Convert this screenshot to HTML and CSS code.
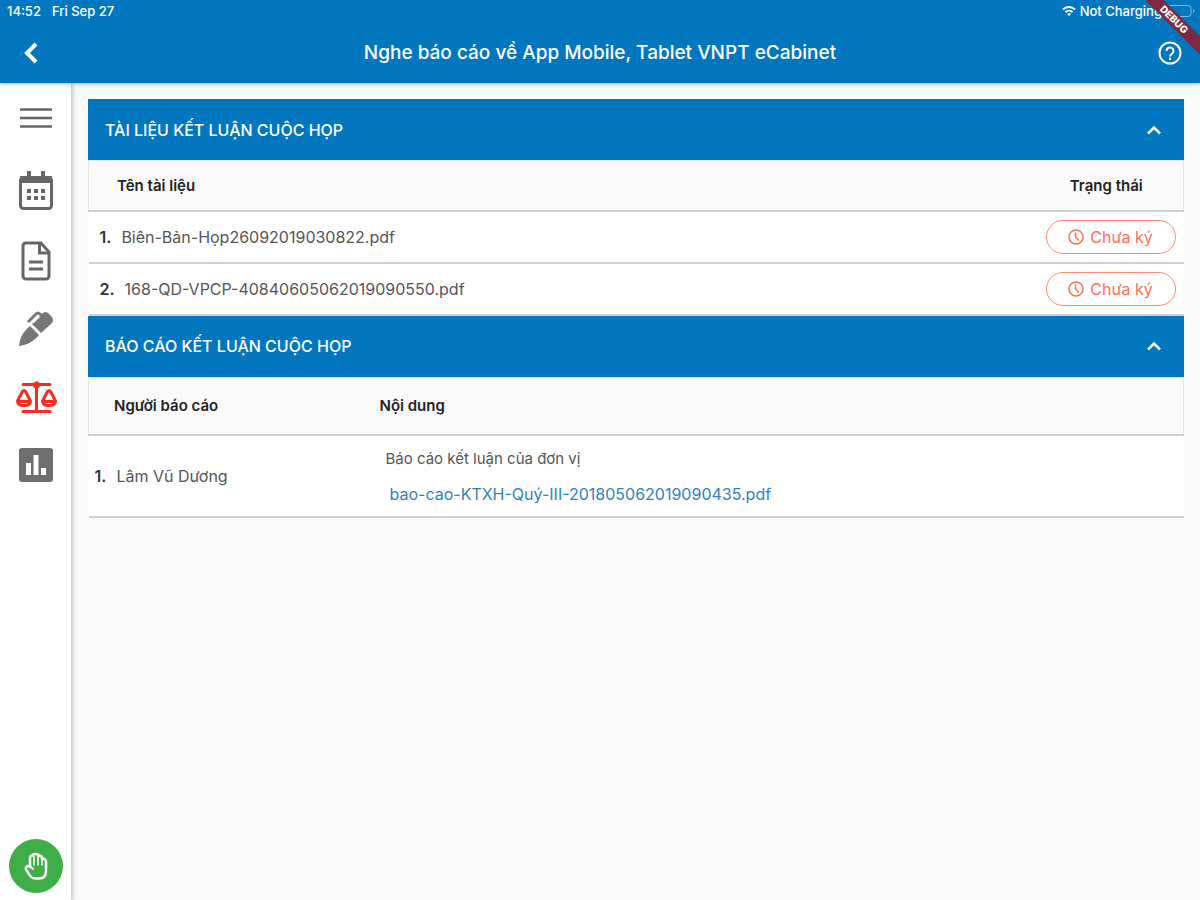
FILE: index.html
```
<!DOCTYPE html>
<html lang="vi">
<head>
    <meta charset="UTF-8">
    <meta name="viewport" content="width=device-width, initial-scale=1.0">
    <title>VNPT eCabinet</title>
    <link rel="stylesheet" href="styles.css">
</head>
<body>
    <header class="header">
        <div class="status-bar">
            <span>14:52</span>
            <span>Fri Sep 27</span>
            <span class="status-right">
                <svg width="14" height="12" viewBox="0 0 14 12" fill="none" stroke="#fff" stroke-width="2">
                    <path d="M1 4.5C4.500 1.200 9.500 1.200 13 4.500M3.500 7.200C5.500 5.300 8.500 5.300 10.500 7.200"/>
                    <path d="M5 9L7 11L9 9C8 8 6 8 5 9Z" fill="#fff" stroke="none"/>
                </svg>
                <span>Not Charging</span>
                <svg class="battery" width="30" height="14" viewBox="0 0 30 14" fill="none">
                    <rect x="1" y="1.500" width="24" height="11" rx="3" stroke="#7fb9de"/>
                    <path d="M2 3h3v8H2z" fill="#fff"/>
                    <path d="M27 5v4c2-1 2-3 0-4z" fill="#7fb9de"/>
                </svg>
            </span>
        </div>
        <div class="app-bar">
            <button class="icon-btn" aria-label="Quay lại">
                <svg width="24" height="24" viewBox="0 0 24 24" fill="none" stroke="#fff" stroke-width="4"><path d="M18 3L9 12L18 21"/></svg>
            </button>
            <h1>Nghe báo cáo về App Mobile, Tablet VNPT eCabinet</h1>
            <button class="icon-btn" aria-label="Trợ giúp">
                <svg width="24" height="24" viewBox="0 0 24 24" fill="none" stroke="#fff" stroke-width="2">
                    <circle cx="12" cy="12" r="10.500"/>
                    <path d="M8.500 10a3.500 3.500 0 1 1 5.500 2.800c-1.300 1-2 1.500-2 2.700"/>
                    <path d="M12 16.800v2.200"/>
                </svg>
            </button>
        </div>
        <span class="debug">DEBUG</span>
    </header>

    <div class="layout">
        <nav class="sidebar">
            <a href="#" aria-label="Menu">
                <svg width="34" height="22" viewBox="0 0 34 22" stroke="#666" stroke-width="2.600"><path d="M1 2.500h32M1 11h32M1 19.500h32"/></svg>
            </a>
            <a href="#" aria-label="Lịch họp">
                <svg width="34" height="40" viewBox="0 0 34 40" fill="#666">
                    <rect x="1.500" y="7.500" width="31" height="31" rx="3" fill="none" stroke="#666" stroke-width="3"/>
                    <path d="M1 6h32v7H1zM8 1h4v7H8zM22 1h4v7h-4z"/>
                    <path d="M8 19h4v4H8zM15 19h4v4h-4zM22 19h4v4h-4zM8 26h4v4H8zM15 26h4v4h-4zM22 26h4v4h-4z"/>
                </svg>
            </a>
            <a href="#" aria-label="Tài liệu">
                <svg width="30" height="40" viewBox="0 0 30 40" fill="none" stroke="#666" stroke-width="3">
                    <path d="M5 2h15l8 9v24a3 3 0 0 1-3 3H5a3 3 0 0 1-3-3V5a3 3 0 0 1 3-3z"/>
                    <path d="M18.500 2v10H28M8 21h14M8 28h14"/>
                </svg>
            </a>
            <a href="#" aria-label="Ký số">
                <svg width="36" height="36" viewBox="0 0 36 36" fill="#777">
                    <path d="M1 35C2 27 4 22 12 15L21 24C15 31 9 34 1 35Z"/>
                    <path d="M14 13L25 2Q27 0 30 2L34 6Q36 9 34 12L23 22Z"/>
                    <path d="M10 11L18 3Q20 1 22 3L24 5" fill="none" stroke="#777" stroke-width="3"/>
                    <path d="M15 11.500L21 5.500" stroke="#fff" stroke-width="2"/>
                </svg>
            </a>
            <a href="#" aria-label="Kết luận" aria-current="page">
                <svg width="42" height="34" viewBox="0 0 42 34" fill="none" stroke="#f22c1e" stroke-width="3" stroke-linecap="round" stroke-linejoin="round">
                    <path d="M8 4.500h27M21.500 3v28M8 31.500h27"/>
                    <circle cx="21.500" cy="5" r="3.500" fill="#f22c1e" stroke="none"/>
                    <path d="M2.500 21L7.500 11.500Q9 9.500 10.500 11.500L15.500 21Q15 25.500 9 25.500T2.500 21ZM4 21.500h10"/>
                    <path d="M27.500 21L32.500 11.500Q34 9.500 35.500 11.500L40.500 21Q40 25.500 34 25.500T27.500 21ZM29 21.500h10"/>
                </svg>
            </a>
            <a href="#" aria-label="Thống kê">
                <svg width="34" height="34" viewBox="0 0 34 34">
                    <rect width="34" height="34" rx="3" fill="#6e6e6e"/>
                    <path d="M7 15h5v12H7zM14.500 7h5v20h-5zM22 20h5v7h-5z" fill="#fff"/>
                </svg>
            </a>
            <button class="hand-btn" aria-label="Giơ tay">
                <svg width="26" height="28" viewBox="0 0 26 28" fill="none" stroke="#fff" stroke-linejoin="round" stroke-linecap="round">
                    <path stroke-width="2.500" d="M7 15V6q0-2.500 2.500-2.500Q10 2 12.500 2T16 3.500q3 0 3 3 4 0 4 3.500v9q0 7.500-7 7.500h-3.500q-4 0-6-3.500L3 17.500q-.5-3 2-3.500z"/>
                    <path stroke-width="1.500" d="M11 4.500V13M15 4.500V13M19 7v6"/>
                    <path stroke-width="2" d="M7 14l3 3"/>
                </svg>
            </button>
        </nav>

        <main class="content">
            <section>
                <button class="panel-head" aria-expanded="true">
                    TÀI LIỆU KẾT LUẬN CUỘC HỌP
                    <svg width="16" height="10" viewBox="0 0 16 10" fill="none" stroke="#fff" stroke-width="2.500"><path d="M2 8.500L8 2.500L14 8.500"/></svg>
                </button>
                <table class="docs">
                    <thead>
                        <tr><th>Tên tài liệu</th><th class="status">Trạng thái</th></tr>
                    </thead>
                    <tbody>
                        <tr>
                            <td><b>1.</b>Biên-Bản-Họp26092019030822.pdf</td>
                            <td class="status">
                                <button class="sign-btn">
                                    <svg width="16" height="16" viewBox="0 0 16 16" fill="none" stroke="#ff6e57" stroke-width="1.500"><circle cx="8" cy="8" r="7"/><path d="M7.500 3.500V8l3.500 3.500"/></svg>
                                    Chưa ký
                                </button>
                            </td>
                        </tr>
                        <tr>
                            <td><b>2.</b>168-QD-VPCP-40840605062019090550.pdf</td>
                            <td class="status">
                                <button class="sign-btn">
                                    <svg width="16" height="16" viewBox="0 0 16 16" fill="none" stroke="#ff6e57" stroke-width="1.500"><circle cx="8" cy="8" r="7"/><path d="M7.500 3.500V8l3.500 3.500"/></svg>
                                    Chưa ký
                                </button>
                            </td>
                        </tr>
                    </tbody>
                </table>
            </section>

            <section>
                <button class="panel-head" aria-expanded="true">
                    BÁO CÁO KẾT LUẬN CUỘC HỌP
                    <svg width="16" height="10" viewBox="0 0 16 10" fill="none" stroke="#fff" stroke-width="2.500"><path d="M2 8.500L8 2.500L14 8.500"/></svg>
                </button>
                <table class="reports">
                    <thead>
                        <tr><th class="reporter">Người báo cáo</th><th>Nội dung</th></tr>
                    </thead>
                    <tbody>
                        <tr>
                            <td class="reporter"><b>1.</b>Lâm Vũ Dương</td>
                            <td>
                                <p>Báo cáo kết luận của đơn vị</p>
                                <a href="#">bao-cao-KTXH-Quý-III-201805062019090435.pdf</a>
                            </td>
                        </tr>
                    </tbody>
                </table>
            </section>
        </main>
    </div>
</body>
</html>
```
FILE: styles.css
```
* {
    box-sizing: border-box;
}

body {
    margin: 0;
    min-height: 100vh;
    display: flex;
    flex-direction: column;
    background-color: #fafafa;
    font-family: Inter, "Liberation Sans", sans-serif;
    font-size: 16px;
    color: #555;
}

button {
    font: inherit;
    border: none;
    background: none;
    padding: 0;
    cursor: pointer;
}

svg {
    display: block;
    flex-shrink: 0;
}

/* Header */
.header {
    position: relative;
    z-index: 1;
    overflow: hidden;
    background-color: #0277bf;
    color: #fff;
    box-shadow: 0 1px 4px rgba(0, 0, 0, 0.3);
}

.status-bar {
    display: flex;
    align-items: center;
    gap: 11px;
    height: 22px;
    padding: 0 4px 0 7px;
    font-size: 13px;
    font-weight: 500;
}

.status-right {
    display: flex;
    align-items: center;
    gap: 4px;
    margin-left: auto;
}

.app-bar {
    display: flex;
    align-items: center;
    justify-content: space-between;
    height: 61px;
    padding: 0 18px;
}

.app-bar h1 {
    margin: 0;
    font-size: 19px;
    font-weight: 500;
}

.debug {
    position: absolute;
    top: 13px;
    right: -26px;
    width: 104px;
    background-color: #7c2840;
    font-size: 10px;
    font-weight: 800;
    line-height: 13px;
    text-align: center;
    transform: rotate(45deg);
}

/* Sidebar */
.layout {
    display: flex;
    flex: 1;
}

.sidebar {
    display: flex;
    flex-direction: column;
    align-items: center;
    width: 71px;
    padding: 24px 0 7px;
    background-color: #fff;
    box-shadow: 1px 0 5px rgba(0, 0, 0, 0.3);
}

.sidebar a {
    display: flex;
    align-items: center;
    justify-content: center;
    height: 68px;
}

.sidebar a:first-child {
    height: 22px;
    margin-bottom: 24px;
}

.sidebar a:nth-child(2) {
    height: 74px;
}

.hand-btn {
    display: flex;
    align-items: center;
    justify-content: center;
    width: 54px;
    height: 54px;
    margin-top: auto;
    border-radius: 50%;
    background-color: #3fae49;
}

/* Content */
.content {
    flex: 1;
    padding: 16px 16px 16px 17px;
}

.panel-head {
    display: flex;
    align-items: center;
    justify-content: space-between;
    width: 100%;
    height: 61px;
    padding: 0 22px 0 17px;
    background-color: #0277bf;
    color: #fff;
    font-weight: 500;
}

table {
    width: 100%;
    border-collapse: collapse;
    background-color: #fff;
}

thead {
    background-color: #fafafa;
    border: 1px solid #e4e4e4;
}

th {
    padding: 0 28px;
    color: #222;
    font-size: 15px;
    font-weight: 600;
    text-align: left;
}

tr {
    border-bottom: 2px solid #d0d0d0;
}

td b {
    margin-right: 10px;
    color: #333;
    font-weight: 600;
}

.docs th {
    height: 50px;
}

.docs td {
    height: 52px;
    padding: 0 8px 0 11px;
}

.docs .status {
    width: 166px;
    padding: 0 8px;
}

.docs th.status {
    padding-left: 20px;
    text-align: center;
}

.sign-btn {
    display: flex;
    align-items: center;
    justify-content: center;
    gap: 6px;
    width: 130px;
    height: 34px;
    margin-left: auto;
    border: 1px solid #ff8a78;
    border-radius: 17px;
    color: #ff6e57;
}

.reports th {
    height: 58px;
    padding-left: 4px;
}

.reports td {
    height: 82px;
    padding: 0 10px;
}

.reports .reporter {
    width: 287px;
    padding-left: 6px;
}

.reports th.reporter {
    padding-left: 25px;
}

.reports p {
    margin: 0 0 16px;
    font-size: 15px;
}

.reports a {
    margin-left: 4px;
    color: #2f7fc1;
    text-decoration: none;
}
```
